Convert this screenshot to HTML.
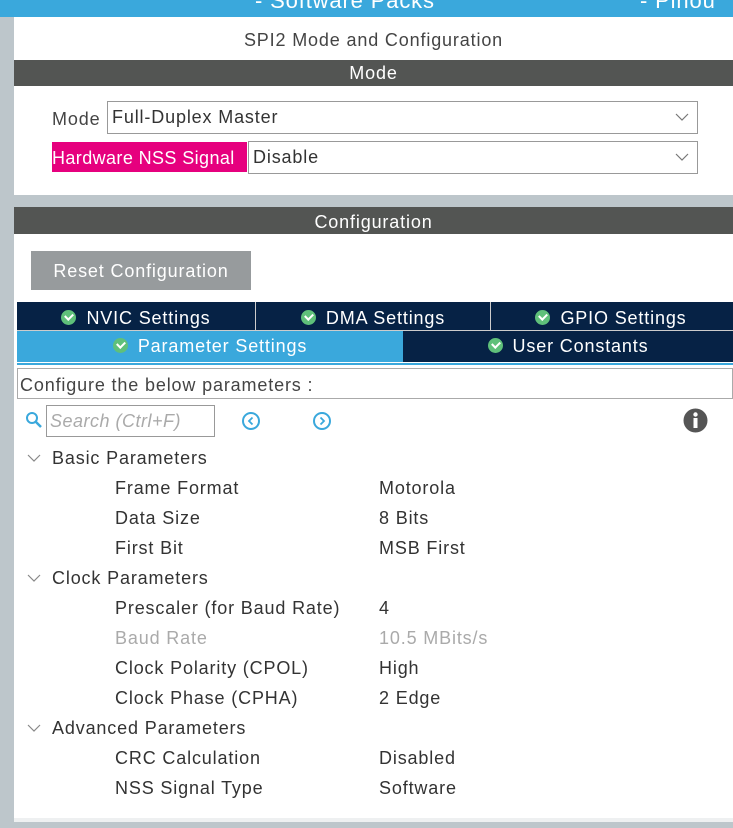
<!DOCTYPE html>
<html><head><style>
*{margin:0;padding:0;box-sizing:border-box}
body{width:733px;height:828px;background:#bdc6cb;font-family:"Liberation Sans",sans-serif;font-size:18px;letter-spacing:0.85px;color:#333;position:relative;overflow:hidden}
.a{position:absolute;white-space:nowrap}
.bar{position:absolute;left:14px;right:0;background:#535553;color:#fff;text-align:center}
.sel{position:absolute;border:1px solid #999;background:#fff;padding-left:4px;line-height:31px}
.chev{position:absolute;right:8px;top:10px}
.tab{position:absolute;color:#fff;text-align:center;font-size:18px}
.ck{display:inline-block;width:15px;height:15px;border-radius:50%;background:#5fc07a;vertical-align:-1px;margin-right:10px;position:relative}
.ck:after{content:"";position:absolute;left:4px;top:3px;width:6px;height:4px;border-left:2px solid #fff;border-bottom:2px solid #fff;transform:rotate(-45deg)}
.r{position:absolute;white-space:nowrap}
</style></head><body>
<div class="a" style="left:0;top:0;width:733px;height:17px;background:#3aa8dc;overflow:hidden"><span class="a" style="left:255px;top:-12px;color:#fff;font-size:22px">-  Software Packs</span><span class="a" style="left:640px;top:-12px;color:#fff;font-size:22px">-  Pinou</span></div>
<div class="a" style="left:14px;top:17px;width:719px;height:178px;background:#fff"></div>
<div class="a" style="left:14px;top:30px;width:719px;text-align:center;color:#444">SPI2 Mode and Configuration</div>
<div class="bar" style="top:60px;height:26px;line-height:27px">Mode</div>
<div class="a" style="left:52px;top:109px;color:#444">Mode</div>
<div class="sel" style="left:107px;top:101px;width:591px;height:33px">Full-Duplex Master<svg class="chev" width="14" height="10"><path d="M1 2l6 6 6-6" fill="none" stroke="#777" stroke-width="1.2"/></svg></div>
<div class="a" style="left:52px;top:142px;width:195px;height:30px;background:#e6007e;color:#fff;line-height:33px;letter-spacing:0.4px">Hardware NSS Signal</div>
<div class="sel" style="left:248px;top:141px;width:450px;height:33px">Disable<svg class="chev" width="14" height="10"><path d="M1 2l6 6 6-6" fill="none" stroke="#777" stroke-width="1.2"/></svg></div>
<div class="a" style="left:14px;top:207px;width:719px;height:615px;background:#fff"></div>
<div class="bar" style="top:207px;height:27px;line-height:30px">Configuration</div>
<div class="a" style="left:31px;top:251px;width:220px;height:39px;background:#979b9d;color:#fff;line-height:41px;text-align:center">Reset Configuration</div>
<div class="a" style="left:17px;top:302px;width:716px;height:60px;background:#062245"></div>
<div class="tab" style="left:17px;top:302px;width:238px;height:28px;line-height:33px"><span class="ck"></span>NVIC Settings</div>
<div class="a" style="left:255px;top:302px;width:1px;height:28px;background:#ccc"></div>
<div class="tab" style="left:256px;top:302px;width:234px;height:28px;line-height:33px"><span class="ck"></span>DMA Settings</div>
<div class="a" style="left:490px;top:302px;width:1px;height:28px;background:#ccc"></div>
<div class="tab" style="left:491px;top:302px;width:240px;height:28px;line-height:33px"><span class="ck"></span>GPIO Settings</div>
<div class="a" style="left:17px;top:330px;width:716px;height:1px;background:#ccc"></div>
<div class="tab" style="left:17px;top:331px;width:386px;height:31px;line-height:31px;background:#3aa8dc"><span class="ck"></span>Parameter Settings</div>
<div class="tab" style="left:403px;top:331px;width:330px;height:31px;line-height:31px"><span class="ck"></span>User Constants</div>
<div class="a" style="left:17px;top:363px;width:716px;height:2px;background:#3aa8dc"></div>
<div class="a" style="left:17px;top:368px;width:716px;height:31px;border:1px solid #aaa;padding-left:2px;line-height:32px;color:#444">Configure the below parameters :</div>
<svg class="a" style="left:25px;top:411px" width="18" height="18"><circle cx="7" cy="7" r="5" fill="none" stroke="#3aa8dc" stroke-width="2"/><path d="M11 11l5 5" stroke="#3aa8dc" stroke-width="2.5"/></svg>
<div class="a" style="left:46px;top:405px;width:169px;height:32px;border:1px solid #999;padding-left:3px;line-height:31px;color:#aaa;font-style:italic;letter-spacing:0.5px">Search (Ctrl+F)</div>
<svg class="a" style="left:241px;top:411px" width="20" height="20"><circle cx="10" cy="10" r="8" fill="none" stroke="#3aa8dc" stroke-width="2"/><path d="M11.5 6.5L8 10l3.5 3.5" fill="none" stroke="#3aa8dc" stroke-width="1.8"/></svg>
<svg class="a" style="left:312px;top:411px" width="20" height="20"><circle cx="10" cy="10" r="8" fill="none" stroke="#3aa8dc" stroke-width="2"/><path d="M8.5 6.5L12 10l-3.5 3.5" fill="none" stroke="#3aa8dc" stroke-width="1.8"/></svg>
<svg class="a" style="left:683px;top:408px" width="25" height="25"><circle cx="12.5" cy="12.5" r="12" fill="#555"/><rect x="10.5" y="10" width="4" height="10" fill="#fff"/><circle cx="12.5" cy="6.5" r="2.2" fill="#fff"/></svg>
<div style="position:absolute;left:0;top:448px;width:733px;color:#333">
<svg class="r" style="left:27px;top:6px" width="14" height="9"><path d="M1 1l6 6 6-6" fill="none" stroke="#888" stroke-width="1.2"/></svg><div class="r" style="left:52px;top:0">Basic Parameters</div>
<div class="r" style="left:115px;top:30px">Frame Format</div><div class="r" style="left:379px;top:30px">Motorola</div>
<div class="r" style="left:115px;top:60px">Data Size</div><div class="r" style="left:379px;top:60px">8 Bits</div>
<div class="r" style="left:115px;top:90px">First Bit</div><div class="r" style="left:379px;top:90px">MSB First</div>
<svg class="r" style="left:27px;top:126px" width="14" height="9"><path d="M1 1l6 6 6-6" fill="none" stroke="#888" stroke-width="1.2"/></svg><div class="r" style="left:52px;top:120px">Clock Parameters</div>
<div class="r" style="left:115px;top:150px">Prescaler (for Baud Rate)</div><div class="r" style="left:379px;top:150px">4</div>
<div class="r" style="left:115px;top:180px;color:#aaa">Baud Rate</div><div class="r" style="left:379px;top:180px;color:#aaa">10.5 MBits/s</div>
<div class="r" style="left:115px;top:210px">Clock Polarity (CPOL)</div><div class="r" style="left:379px;top:210px">High</div>
<div class="r" style="left:115px;top:240px">Clock Phase (CPHA)</div><div class="r" style="left:379px;top:240px">2 Edge</div>
<svg class="r" style="left:27px;top:276px" width="14" height="9"><path d="M1 1l6 6 6-6" fill="none" stroke="#888" stroke-width="1.2"/></svg><div class="r" style="left:52px;top:270px">Advanced Parameters</div>
<div class="r" style="left:115px;top:300px">CRC Calculation</div><div class="r" style="left:379px;top:300px">Disabled</div>
<div class="r" style="left:115px;top:330px">NSS Signal Type</div><div class="r" style="left:379px;top:330px">Software</div>
</div>
<div class="a" style="left:14px;top:818px;width:719px;height:4px;background:#eef0f1"></div>
</body></html>
